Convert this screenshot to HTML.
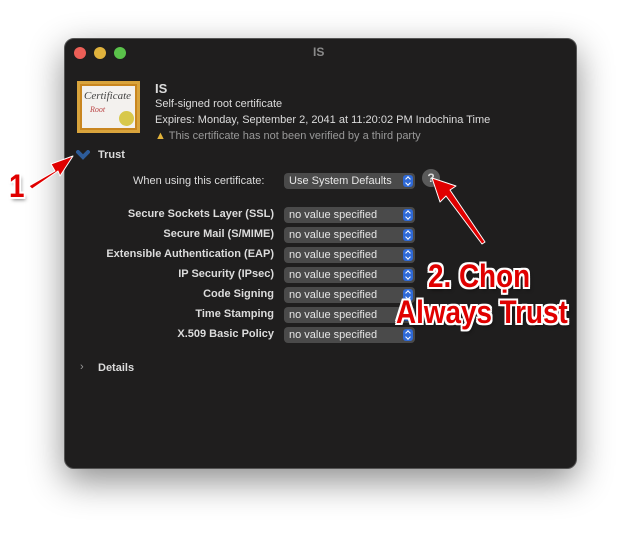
<!DOCTYPE html>
<html><head><style>
body{margin:0;width:633px;height:544px;background:#fff;position:relative;overflow:hidden;font-family:"Liberation Sans",sans-serif}
.win{position:absolute;left:64px;top:38px;width:513px;height:431px;background:#1f1e1e;border-radius:10px;border:1px solid #555;box-sizing:border-box;box-shadow:0 12px 35px rgba(0,0,0,.45)}
.dot{position:absolute;top:8px;width:12px;height:12px;border-radius:50%}
.t{position:absolute;color:#dcdcdc;font-size:11px;white-space:nowrap}
.b{font-weight:bold}
.lab{position:absolute;right:302px;color:#dcdcdc;font-size:11px;font-weight:bold;white-space:nowrap}
.pop{position:absolute;left:219px;width:131px;height:16px;background:#4a4a4a;border-radius:4px;color:#e6e6e6;font-size:11px;line-height:16px;padding-left:5px;box-sizing:border-box}
.pop i{position:absolute;right:2px;top:2px;width:10px;height:12px;background:#2f6ad8;border-radius:3px}
.pop i:before{content:"";position:absolute;left:3px;top:2px;width:3px;height:3px;border-left:1px solid #fff;border-top:1px solid #fff;transform:rotate(45deg)}
.pop i:after{content:"";position:absolute;left:3px;top:6px;width:3px;height:3px;border-right:1px solid #fff;border-bottom:1px solid #fff;transform:rotate(45deg)}
.red{position:absolute;color:#e00000;font-weight:bold;font-family:"Liberation Sans",sans-serif;font-size:32px;line-height:36px;white-space:nowrap;transform-origin:0 0;transform:scaleX(0.87);text-shadow:-2px -2px 0 #fff,2px -2px 0 #fff,-2px 2px 0 #fff,2px 2px 0 #fff,0 2px 0 #fff,0 -2px 0 #fff,2px 0 0 #fff,-2px 0 0 #fff,2px 3px 4px rgba(0,0,0,.5)}
</style></head><body>
<div class="win">
<div class="dot" style="left:9px;background:#ec5f57"></div>
<div class="dot" style="left:29px;background:#e0b23c"></div>
<div class="dot" style="left:49px;background:#5ac24a"></div>
<div class="t b" style="left:248px;top:6px;color:#8a8a8a;font-size:12px">IS</div>
<div style="position:absolute;left:12px;top:42px;width:63px;height:52px;background:#c9861f;box-sizing:border-box;border:3px solid #d9a43c">
 <div style="position:absolute;inset:2px;background:#f3f1ee"></div>
 <div style="position:absolute;left:4px;top:6px;font-family:'Liberation Serif';font-style:italic;font-size:11px;color:#444">Certificate</div>
 <div style="position:absolute;left:10px;top:21px;font-family:'Liberation Serif';font-style:italic;font-size:8px;color:#b44">Root</div>
 <div style="position:absolute;left:39px;top:27px;width:15px;height:15px;border-radius:50%;background:#d8c84a"></div>
</div>
<div class="t b" style="left:90px;top:42px;font-size:13px">IS</div>
<div class="t" style="left:90px;top:59px">Self-signed root certificate</div>
<div class="t" style="left:90px;top:75px">Expires: Monday, September 2, 2041 at 11:20:02 PM Indochina Time</div>
<div class="t" style="left:90px;top:91px;color:#999"><span style="color:#e2b33a">▲</span> This certificate has not been verified by a third party</div>
<svg style="position:absolute;left:11px;top:111px" width="14" height="10"><path d="M2 2 L7 7 L12 2" stroke="#2d5c9a" stroke-width="4" fill="none" stroke-linecap="round"/></svg>
<div class="t b" style="left:33px;top:110px">Trust</div>
<div class="t" style="left:68px;top:136px">When using this certificate:</div>
<div class="pop" style="top:134px">Use System Defaults<i></i></div>
<div style="position:absolute;left:357px;top:130px;width:18px;height:18px;border-radius:50%;background:#5a5a5a;color:#ddd;font-size:12px;text-align:center;line-height:18px;font-weight:bold">?</div>
<div class="lab" style="top:169px">Secure Sockets Layer (SSL)</div><div class="pop" style="top:168px">no value specified<i></i></div>
<div class="lab" style="top:189px">Secure Mail (S/MIME)</div><div class="pop" style="top:188px">no value specified<i></i></div>
<div class="lab" style="top:209px">Extensible Authentication (EAP)</div><div class="pop" style="top:208px">no value specified<i></i></div>
<div class="lab" style="top:229px">IP Security (IPsec)</div><div class="pop" style="top:228px">no value specified<i></i></div>
<div class="lab" style="top:249px">Code Signing</div><div class="pop" style="top:248px">no value specified<i></i></div>
<div class="lab" style="top:269px">Time Stamping</div><div class="pop" style="top:268px">no value specified<i></i></div>
<div class="lab" style="top:289px">X.509 Basic Policy</div><div class="pop" style="top:288px">no value specified<i></i></div>
<div class="t" style="left:15px;top:322px;color:#999">›</div>
<div class="t b" style="left:33px;top:323px">Details</div>
</div>
<svg style="position:absolute;left:0;top:0" width="633" height="544">
<g fill="#e00000" stroke="#fff" stroke-width="1" stroke-linejoin="round">
<path d="M29 186 L55 171 L51 164 L73 156 L60 176 L58 171 L32 189 Z"/>
<path d="M482 244 L446 196 L440 202 L432 178 L456 186 L450 190 L485 242 Z"/>
</g></svg>
<div class="red" style="left:9px;top:168px">1</div>
<div class="red" style="left:428px;top:258px">2. Chọn</div>
<div class="red" style="left:396px;top:294px">Always Trust</div>
</body></html>
